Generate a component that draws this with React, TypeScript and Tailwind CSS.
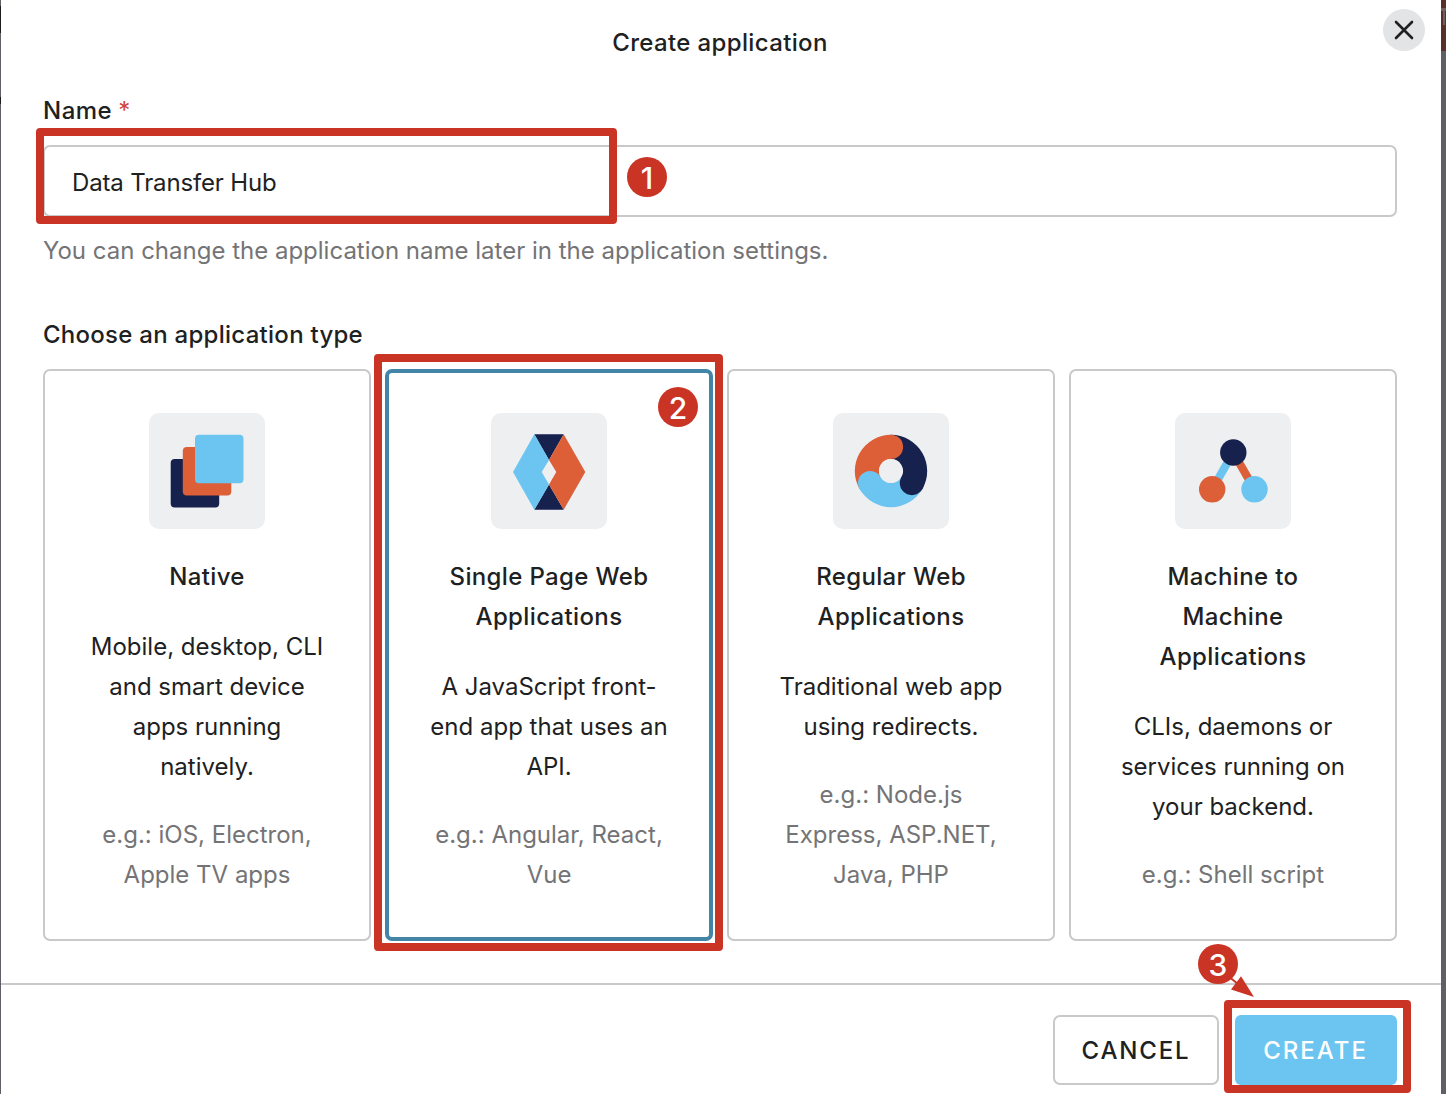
import type { ReactNode } from 'react';

const NAVY = '#16214d';
const ORANGE = '#dc5f38';
const BLUE = '#6cc5f0';

function NativeIcon() {
  return (
    <svg viewBox="0 0 116 116" className="size-full">
      <rect x="21.7" y="46" width="48.5" height="48.5" rx="4" fill={NAVY} />
      <rect x="33.8" y="34" width="48.5" height="48.5" rx="4" fill={ORANGE} />
      <rect x="46" y="21.8" width="48.5" height="48.5" rx="4" fill={BLUE} />
    </svg>
  );
}

function SpaIcon() {
  return (
    <svg viewBox="0 0 116 116" className="size-full">
      <path d="M43.3 21.3H72.7L58 47Z M43.3 96.7H72.7L58 71.5Z" fill={NAVY} />
      <path d="M43.3 21.3L58 47L50.7 59L58 71.5L43.3 96.7L22 59Z" fill={BLUE} />
      <path d="M72.7 21.3L58 47L65.3 59L58 71.5L72.7 96.7L94.3 59Z" fill={ORANGE} />
    </svg>
  );
}

function RegularIcon() {
  return (
    <svg viewBox="0 0 116 116" className="size-full">
      <path d="M58 21.8A36.2 36.2 0 0 1 89.35 76.1L68.4 64A12 12 0 0 0 58 46Z" fill={NAVY} />
      <path d="M89.35 76.1A36.2 36.2 0 0 1 26.65 76.1L47.6 64A12 12 0 0 0 68.4 64Z" fill={BLUE} />
      <path d="M26.65 76.1A36.2 36.2 0 0 1 58 21.8V46A12 12 0 0 0 47.6 64Z" fill={ORANGE} />
      <circle cx="58" cy="33.9" r="12.1" fill={ORANGE} />
      <circle cx="78.9" cy="70.05" r="12.1" fill={NAVY} />
      <circle cx="37.1" cy="70.05" r="12.1" fill={BLUE} />
      <circle cx="57.8" cy="58" r="11.8" fill="#eeeff1" />
    </svg>
  );
}

function MachineIcon() {
  return (
    <svg viewBox="0 0 116 116" className="size-full">
      <path d="M58.3 39.5L37.2 76.3" stroke={BLUE} strokeWidth="8.2" />
      <path d="M58.3 39.5L79.5 76.3" stroke={ORANGE} strokeWidth="8.2" />
      <circle cx="58.3" cy="39.5" r="13.2" fill={NAVY} />
      <circle cx="37.2" cy="76.3" r="13.2" fill={ORANGE} />
      <circle cx="79.5" cy="76.3" r="13.2" fill={BLUE} />
    </svg>
  );
}

interface AppType {
  icon: ReactNode;
  title: string[];
  description: string[];
  examples: string[];
  selected?: boolean;
}

const APP_TYPES: AppType[] = [
  {
    icon: <NativeIcon />,
    title: ['Native'],
    description: ['Mobile, desktop, CLI', 'and smart device', 'apps running', 'natively.'],
    examples: ['e.g.: iOS, Electron,', 'Apple TV apps'],
  },
  {
    icon: <SpaIcon />,
    title: ['Single Page Web', 'Applications'],
    description: ['A JavaScript front-', 'end app that uses an', 'API.'],
    examples: ['e.g.: Angular, React,', 'Vue'],
    selected: true,
  },
  {
    icon: <RegularIcon />,
    title: ['Regular Web', 'Applications'],
    description: ['Traditional web app', 'using redirects.'],
    examples: ['e.g.: Node.js', 'Express, ASP.NET,', 'Java, PHP'],
  },
  {
    icon: <MachineIcon />,
    title: ['Machine to', 'Machine', 'Applications'],
    description: ['CLIs, daemons or', 'services running on', 'your backend.'],
    examples: ['e.g.: Shell script'],
  },
];

function Lines({ lines }: { lines: string[] }) {
  return (
    <>
      {lines.map((line) => (
        <span key={line} className="block whitespace-nowrap">
          {line}
        </span>
      ))}
    </>
  );
}

/** Red outline laid over the element that a step refers to. */
function Highlight({ className }: { className: string }) {
  return <div className={`pointer-events-none absolute rounded-[4px] border-8 border-[#c93425] ${className}`} />;
}

function Step({ n, className }: { n: number; className: string }) {
  return (
    <div
      className={`absolute flex size-10 items-center justify-center rounded-full bg-[#c93425] pt-px text-[30px] leading-none font-medium text-white ${className}`}
    >
      {n}
    </div>
  );
}

function TypeCard({ type }: { type: AppType }) {
  return (
    <div className="relative">
      <button
        type="button"
        className={`flex h-[572px] w-full flex-col items-center rounded-[7px] text-center text-[24px] leading-10 ${
          type.selected ? 'border-4 border-[#4385a6] pt-10' : 'border-2 border-[#c9c9ca] pt-[42px]'
        }`}
      >
        <div className="size-[116px] shrink-0 overflow-hidden rounded-[10px] bg-[#eeeff1]">{type.icon}</div>
        <h3 className="mt-7 font-medium tracking-[0.36px]">
          <Lines lines={type.title} />
        </h3>
        <p className="mt-[30px]">
          <Lines lines={type.description} />
        </p>
        <p className="mt-7 text-[#747476]">
          <Lines lines={type.examples} />
        </p>
      </button>
      {type.selected && (
        <>
          <Highlight className="-top-[15px] -right-[10px] -bottom-[10px] -left-[11px]" />
          <Step n={2} className="top-[18px] right-[15px]" />
        </>
      )}
    </div>
  );
}

export default function App() {
  return (
    <div className="flex h-[1094px] w-[1446px] overflow-hidden bg-[#5f6066] font-[Inter,sans-serif] text-[#1e2122] [font-feature-settings:'calt'_0]">
      <div className="w-px shrink-0">
        <div className="mt-[6px] h-[27px] bg-[#1c1c1e]" />
        <div className="mt-16 h-[7px] bg-[#1c1c1e]" />
      </div>
      <div className="relative flex w-[1440px] shrink-0 flex-col bg-white">
        <header className="flex h-[86px] items-center justify-center pr-[2px]">
          <h1 className="text-[24px] leading-10 font-medium tracking-[0.36px]">Create application</h1>
          <button
            type="button"
            aria-label="Close"
            className="absolute top-[9px] right-4 flex size-[42px] items-center justify-center rounded-full bg-[#e3e4e6]"
          >
            <svg viewBox="0 0 20 20" className="size-5" stroke="#1e2122" strokeWidth="2.6" strokeLinecap="round">
              <path d="M2 2L18 18M18 2L2 18" />
            </svg>
          </button>
        </header>

        <main className="flex flex-col px-[42px] pr-11">
          <label className="mt-[5px] flex h-10 items-center gap-[6px] text-[24px] font-medium tracking-[0.5px]">
            Name <span className="font-normal text-[#d0443c]">*</span>
          </label>
          <div className="relative mt-[14px]">
            <div className="flex h-[72px] items-center rounded-[7px] border-2 border-[#c9c9ca] pt-1 pl-[27px] text-[24px] tracking-[-0.15px]">
              Data Transfer Hub
            </div>
            <Highlight className="-top-[17px] -left-[7px] h-[96px] w-[581px]" />
            <Step n={1} className="top-[12px] left-[584px]" />
          </div>
          <p className="mt-[14px] text-[24px] leading-10 text-[#747476]">
            You can change the application name later in the application settings.
          </p>

          <h2 className="mt-11 text-[24px] leading-10 font-medium tracking-[0.27px]">Choose an application type</h2>
          <div className="mt-[14px] grid grid-cols-4 gap-[14px]">
            {APP_TYPES.map((type) => (
              <TypeCard key={type.title.join(' ')} type={type} />
            ))}
          </div>
        </main>

        <footer className="mt-[42px] flex h-[111px] items-start justify-end gap-4 border-t-2 border-[#c9c9ca] pt-[30px] pr-11 text-[24px] font-medium">
          <button type="button" className="h-[70px] w-[166px] rounded-[7px] border-2 border-[#c9c9ca] pt-[2px] tracking-[1.85px]">
            CANCEL
          </button>
          <div className="relative">
            <button type="button" className="h-[70px] w-[162px] rounded-[6px] bg-[#6cc5f0] pt-[2px] pr-px tracking-[2px] text-white">
              CREATE
            </button>
            <Highlight className="-top-[15px] -left-[11px] h-[93px] w-[187px]" />
            <svg viewBox="0 0 32 32" className="absolute -top-[47px] -left-[12px] size-8" fill="#c93425">
              <path d="M31 29L18 8.3L8 21.5Z" />
              <path d="M5 8L20 20" stroke="#c93425" strokeWidth="2" />
            </svg>
            <Step n={3} className="-top-[71px] -left-[37px]" />
          </div>
        </footer>
      </div>
      <div className="w-[5px] shrink-0">
        <div className="h-[51px] bg-[#5a2f2b] pt-2">
          <div className="h-[3px] bg-[#70615f]" />
          <div className="ml-[2px] h-[14px] w-[2px] bg-[#70615f]" />
        </div>
      </div>
    </div>
  );
}
